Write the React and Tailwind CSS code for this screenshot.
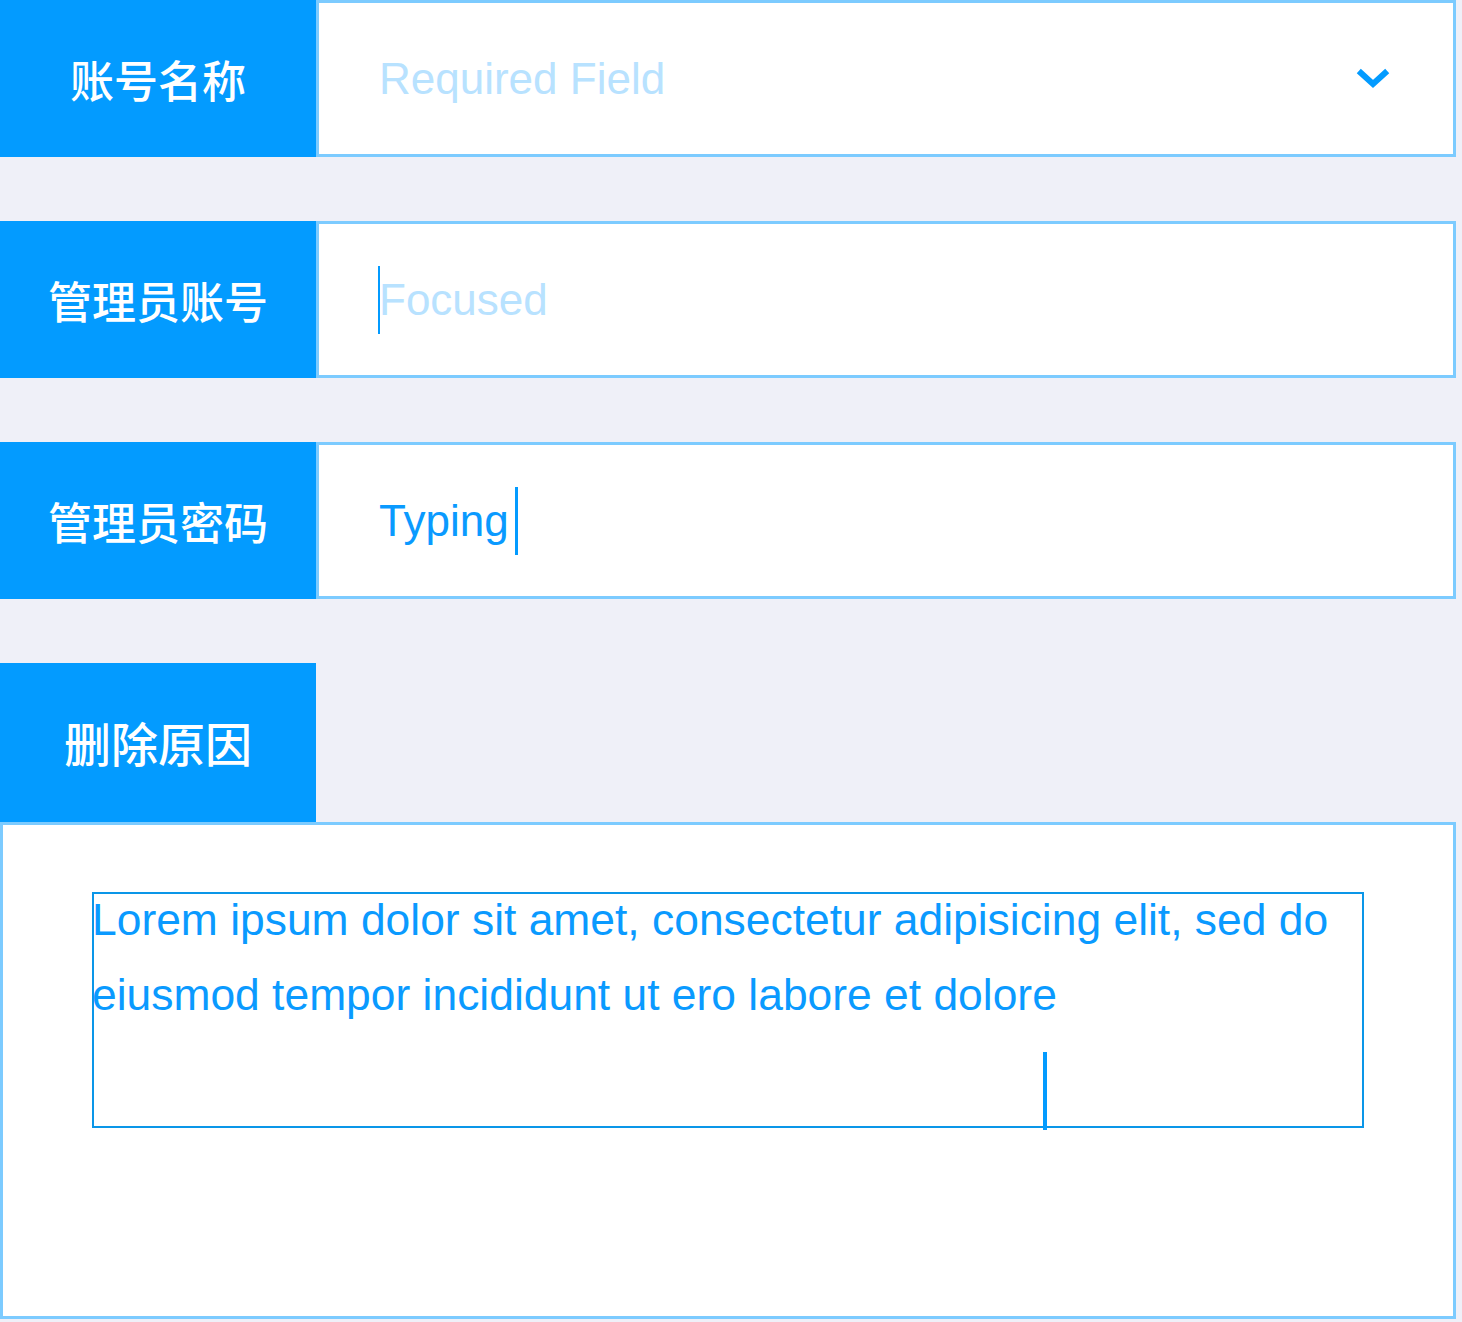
const latin = { fontFamily: '"Liberation Sans", Arial, sans-serif' };
const cjk = { fontFamily: '"Noto Sans CJK SC", "Noto Sans", sans-serif' };

function Label({ children, className = "text-[44px]" }) {
  return (
    <div
      className={"w-[316px] shrink-0 bg-[#039bff] flex items-center justify-center text-white font-medium " + className}
      style={cjk}
    >
      {children}
    </div>
  );
}

function Row({ label, children }) {
  return (
    <div className="flex h-[157px]">
      <Label>{label}</Label>
      <div className="flex-1 bg-white border-[3px] border-[#7ccbff] flex items-center pl-[62px] pr-[63px] text-[44px]" style={latin}>
        {children}
      </div>
      <div className="w-[6px] shrink-0" />
    </div>
  );
}

export default function App() {
  return (
    <div className="w-[1462px] h-[1322px] bg-[#eff0f8] flex flex-col">
      <Row label="账号名称">
        <span className="text-[#b8e2ff] flex-1 -ml-[2px]">Required Field</span>
        <svg width="34" height="22" viewBox="0 0 34 22" className="shrink-0">
          <polyline points="5,5 17,16 29,5" fill="none" stroke="#039bff" strokeWidth="6" strokeLinecap="square" />
        </svg>
      </Row>

      <div className="h-[64px] shrink-0" />

      <Row label="管理员账号">
        <span className="w-[2px] h-[68px] bg-[#039bff] -ml-[3px]" />
        <span className="text-[#b8e2ff] -ml-[1px]">Focused</span>
      </Row>

      <div className="h-[64px] shrink-0" />

      <Row label="管理员密码">
        <span className="text-[#0a9aff] -ml-[2px]">Typing</span>
        <span className="w-[3px] h-[68px] bg-[#039bff] ml-[6px]" />
      </Row>

      <div className="h-[64px] shrink-0" />

      <div className="flex h-[159px] shrink-0">
        <Label className="text-[47px]">删除原因</Label>
      </div>

      <div className="flex">
        <div className="w-[1456px] h-[497px] bg-white border-[3px] border-[#7ccbff] pl-[89px] pt-[67px]">
          <div className="relative w-[1272px] h-[236px] border-2 border-[#0a96e8]">
            <p className="text-[44.4px] leading-[75px] text-[#0a9aff] -mt-[12px] -ml-[2px]" style={latin}>
              Lorem ipsum dolor sit amet, consectetur adipisicing elit, sed do eiusmod tempor incididunt ut ero labore et dolore
            </p>
            <span className="absolute left-[949px] top-[158px] w-[4px] h-[78px] bg-[#039bff]" />
          </div>
        </div>
      </div>
    </div>
  );
}
